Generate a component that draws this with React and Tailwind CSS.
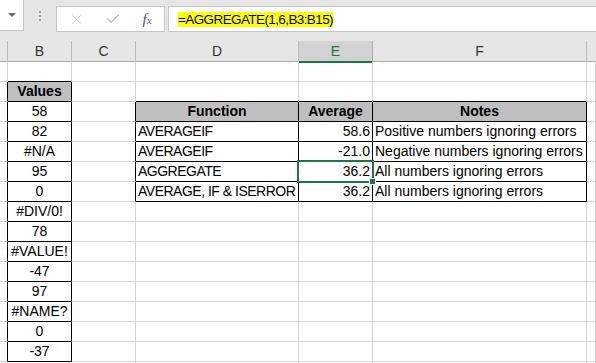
import React from 'react';
import { X, Check } from 'lucide-react';

const COLS = ['', 'B', 'C', 'D', 'E', 'F', ''];

// cell contents by row number (1-based) and column index
const values = ['58', '82', '#N/A', '95', '0', '#DIV/0!', '78', '#VALUE!', '-47', '97', '#NAME?', '0', '-37'];
const table = [
  ['AVERAGEIF', '58.6', 'Positive numbers ignoring errors'],
  ['AVERAGEIF', '-21.0', 'Negative numbers ignoring errors'],
  ['AGGREGATE', '36.2', 'All numbers ignoring errors'],
  ['AVERAGE, IF & ISERROR', '36.2', 'All numbers ignoring errors'],
];

function inBox(r, c) {
  return (c === 1 && r >= 2 && r <= 15) || (c >= 3 && c <= 5 && r >= 3 && r <= 7);
}

function cellData(r, c) {
  if (c === 1 && r === 2) return { text: 'Values', head: true };
  if (c === 1 && r >= 3 && r <= 15) return { text: values[r - 3], align: 'center' };
  if (r === 3 && c >= 3 && c <= 5) return { text: ['Function', 'Average', 'Notes'][c - 3], head: true };
  if (r >= 4 && r <= 7 && c >= 3 && c <= 5) {
    const t = table[r - 4][c - 3];
    return { text: t, align: c === 4 ? 'right' : 'left', tight: c === 3 };
  }
  return null;
}

function Cell({ r, c }) {
  const d = cellData(r, c);
  const right = inBox(r, c) || inBox(r, c + 1);
  const bottom = inBox(r, c) || inBox(r + 1, c);
  const cls = [
    'h-[20px] border-r border-b whitespace-nowrap overflow-visible leading-[19px] text-[14px] text-black',
    right ? 'border-r-black' : 'border-r-[#d4d4d4]',
    bottom ? 'border-b-black' : 'border-b-[#d4d4d4]',
  ];
  if (d && d.head) cls.push('bg-[#bfbfbf] font-bold text-center');
  else if (d && d.align === 'center') cls.push('text-center');
  else if (d && d.align === 'right') cls.push('text-right pr-[2px]');
  else if (d) cls.push('pl-[2px]');
  if (d && d.tight) cls.push('tracking-[-0.5px]');
  return <div className={cls.join(' ')}>{d ? d.text : ''}</div>;
}

export default function App() {
  const rows = Array.from({ length: 16 }, (_, i) => i + 1);
  return (
    <div
      className="w-[596px] h-[363px] overflow-hidden bg-white"
      style={{ fontFamily: '"Liberation Sans", Arial, sans-serif' }}
    >
      {/* formula bar */}
      <div className="h-[41px] bg-[#e6e6e6] flex items-start">
        <div className="w-[24px] h-[31px] bg-white border-r border-b border-[#c6c6c6] flex items-center justify-end pr-[7px]">
          <div className="w-0 h-0 border-l-[4px] border-r-[4px] border-t-[4px] border-l-transparent border-r-transparent border-t-[#6a6a6a]" />
        </div>
        <div className="w-[32px] h-[31px] flex flex-col items-center justify-center gap-[2px]">
          <div className="w-[2px] h-[2px] bg-[#a8a8a8]" />
          <div className="w-[2px] h-[2px] bg-[#a8a8a8]" />
          <div className="w-[2px] h-[2px] bg-[#a8a8a8]" />
        </div>
        <div className="mt-[6px] w-[109px] h-[26px] bg-white border border-[#c6c6c6] flex items-center">
          <div className="w-[38px] flex justify-center">
            <X size={15} strokeWidth={1.4} color="#bdbdbd" />
          </div>
          <div className="w-[35px] flex justify-center">
            <Check size={16} strokeWidth={2.2} color="#bdbdbd" />
          </div>
          <div className="w-[34px] flex justify-center">
            <span
              className="italic text-[15px] text-[#555] leading-none"
              style={{ fontFamily: '"Liberation Serif", serif' }}
            >
              f<span className="text-[11px]">x</span>
            </span>
          </div>
        </div>
        <div className="mt-[6px] ml-[3px] flex-1 h-[26px] bg-white border border-r-0 border-[#c6c6c6] flex items-center pl-[9px]">
          <span className="bg-[#ffff00] text-[13.5px] leading-[15px] tracking-[-0.6px] text-black">
            =AGGREGATE(1,6,B3:B15)
          </span>
        </div>
      </div>

      {/* column headers */}
      <div className="grid grid-cols-[8px_64px_64px_163px_74px_214px_1fr] h-[21px] bg-[#e6e6e6] border-b border-[#ababab]">
        {COLS.map((l, i) =>
          i === 4 ? (
            <div
              key={i}
              className="bg-[#d2d2d2] border-r border-[#ababab] border-b-2 border-b-[#217346] text-[14px] text-[#217346] text-center leading-[20px]"
            >
              {l}
            </div>
          ) : (
            <div
              key={i}
              className={
                i === 6
                  ? 'text-[14px] text-[#333] text-center leading-[20px]'
                  : 'border-r border-[#bcbcbc] text-[14px] text-[#333] text-center leading-[20px]'
              }
            >
              {l}
            </div>
          )
        )}
      </div>

      {/* cells */}
      <div className="relative">
        {rows.map((r) => (
          <div key={r} className="grid grid-cols-[8px_64px_64px_163px_74px_214px_1fr]">
            {COLS.map((_, c) => (
              <Cell key={c} r={r} c={c} />
            ))}
          </div>
        ))}
        {/* active cell E6 */}
        <div className="absolute left-[297px] top-[98px] w-[77px] h-[23px] border-2 border-[#217346]" />
        <div className="absolute left-[369px] top-[116px] w-[7px] h-[7px] bg-[#217346] border border-white" />
      </div>
    </div>
  );
}
